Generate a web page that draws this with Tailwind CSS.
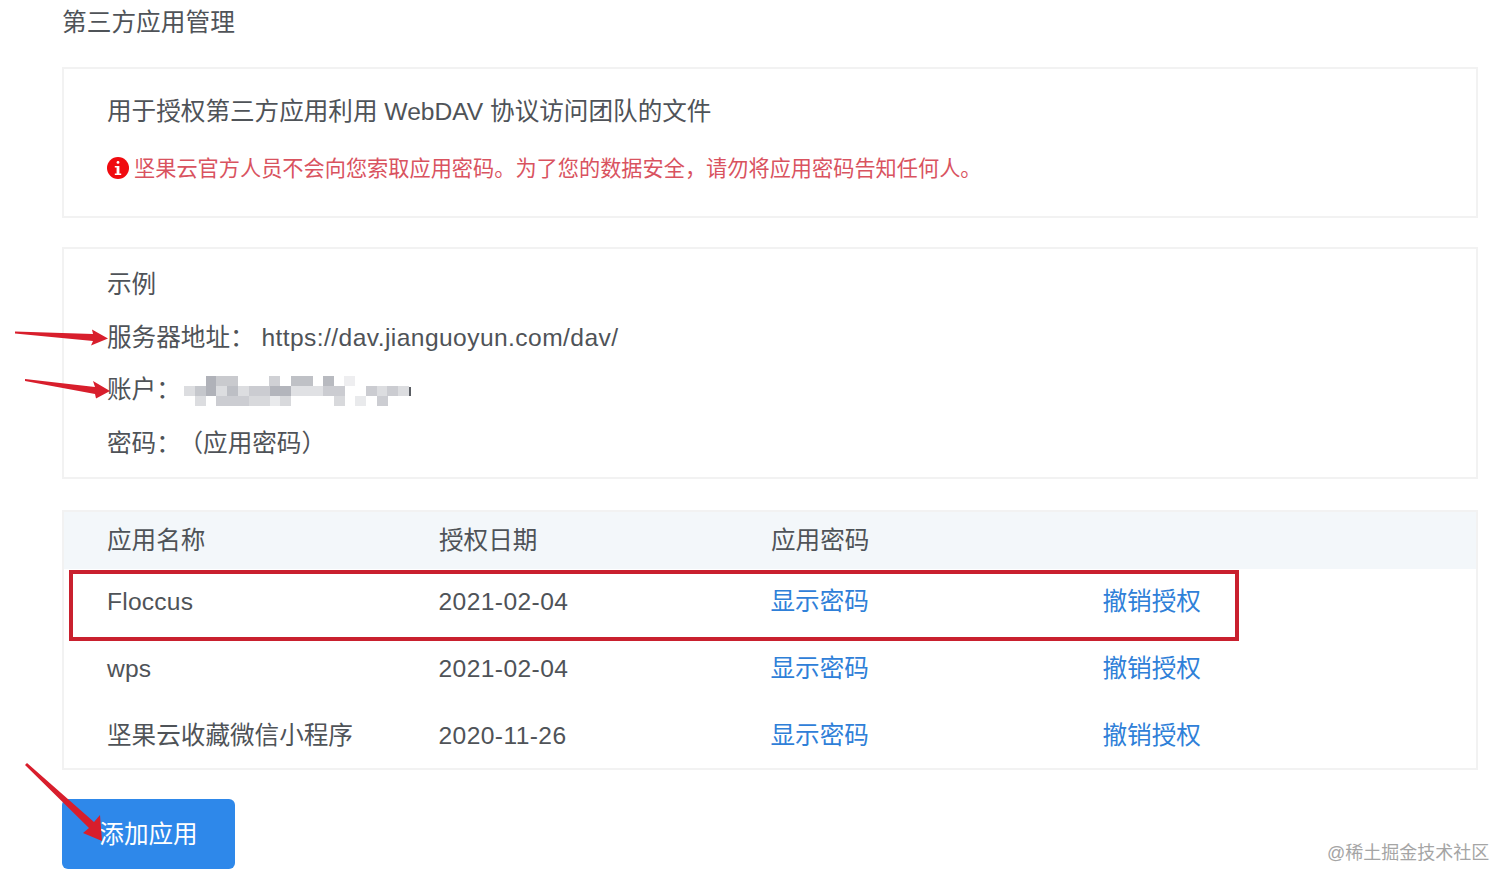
<!DOCTYPE html>
<html lang="zh-CN">
<head>
  <meta charset="UTF-8" />
  <title>第三方应用管理</title>
  <script src="https://cdn.jsdelivr.net/npm/@tailwindcss/browser@4"></script>
</head>
<body class="bg-white text-[#4f5358] font-['Liberation_Sans','Noto_Sans_CJK_SC',sans-serif]">

<div class="relative h-[887px] w-[1512px] overflow-hidden">
  <main class="w-[1416px] ml-[62px] text-[24.6px]">
    <h1 class="h-[44px] leading-[45px] font-normal text-[24.7px]">第三方应用管理</h1>

    <!-- 说明 -->
    <section class="mt-[23px] h-[151px] border-2 border-[#f2f2f2] pl-[43px] pt-[23px]">
      <p class="h-[40px] leading-[40px]">用于授权第三方应用利用 WebDAV 协议访问团队的文件</p>
      <p class="mt-[17px] flex items-center gap-[5px] text-[21.2px] leading-[40px] text-[#d9535f]">
        <svg class="w-[22px] h-[22px] shrink-0 -mt-[3px]" viewBox="0 0 22 22">
          <circle cx="11" cy="11" r="11" fill="#f00a0f" />
          <rect x="9.6" y="4" width="2.8" height="2.8" rx="1.4" fill="#fff" />
          <path d="M7.8 9h4.6v7.4h1.8v1.6H7.8v-1.6h1.8v-5.8H7.8z" fill="#fff" />
        </svg>
        <span>坚果云官方人员不会向您索取应用密码。为了您的数据安全，请勿将应用密码告知任何人。</span>
      </p>
    </section>

    <!-- 示例 -->
    <section class="mt-[29px] h-[232px] border-2 border-[#f2f2f2] pl-[43px] pt-[9px]">
      <p class="h-[53px] leading-[53px]">示例</p>
      <p class="h-[53px] leading-[53px]">服务器地址： <span class="tracking-[0.42px]">https://dav.jianguoyun.com/dav/</span></p>
      <p class="h-[53px] flex items-center">
        <span>账户：</span>
        <svg class="ml-[3px] w-[228px] h-[32px]" viewBox="0 0 228 32">
          <g fill="#dcdde0">
            <rect x="0" y="11" width="11" height="10" />
            <rect x="32" y="1" width="22" height="10" fill="#c9cace" />
            <rect x="32" y="11" width="11" height="10" />
            <rect x="54" y="11" width="11" height="10" />
            <rect x="85" y="1" width="11" height="10" fill="#d0d1d5" />
            <rect x="107" y="1" width="22" height="10" fill="#bfc1c6" />
            <rect x="139" y="1" width="11" height="10" fill="#b8bac0" />
            <rect x="150" y="11" width="11" height="10" fill="#cbccd1" />
            <rect x="160" y="1" width="11" height="10" fill="#eeeef0" />
            <rect x="96" y="11" width="43" height="10" fill="#e0e1e4" />
            <rect x="182" y="11" width="11" height="10" fill="#cbccd1" />
            <rect x="203" y="11" width="11" height="10" fill="#cbccd1" />
            <rect x="193" y="11" width="10" height="10" />
            <rect x="214" y="11" width="11" height="10" />
            <rect x="11" y="11" width="11" height="10" fill="#c5c7cc" />
            <rect x="22" y="1" width="10" height="20" fill="#b0b2b9" />
            <rect x="43" y="11" width="11" height="10" fill="#bdbfc5" />
            <rect x="65" y="11" width="21" height="10" fill="#cbccd1" />
            <rect x="86" y="11" width="21" height="10" fill="#b3b5bc" />
            <rect x="139" y="11" width="11" height="10" fill="#cbccd1" />
            <rect x="11" y="21" width="11" height="10" />
            <rect x="32" y="21" width="33" height="10" fill="#cccdd2" />
            <rect x="65" y="21" width="22" height="10" fill="#d8d9dc" />
            <rect x="86" y="21" width="10" height="10" fill="#e9eaec" />
            <rect x="96" y="21" width="11" height="10" fill="#d8d9dc" />
            <rect x="150" y="21" width="11" height="10" fill="#d8d9dc" />
            <rect x="171" y="21" width="11" height="10" fill="#e9eaec" />
            <rect x="193" y="21" width="11" height="10" fill="#cccdd2" />
          </g>
          <rect x="225" y="12" width="2" height="9" fill="#5b5e64" />
        </svg>
      </p>
      <p class="h-[53px] leading-[53px]">密码：<span class="ml-[10px]">（应用密码）</span></p>
    </section>

    <!-- 应用列表 -->
    <section class="mt-[31px] h-[260px] border-2 border-[#f2f2f2]">
      <div class="grid grid-cols-[332px_332px_332px_1fr] h-[57px] items-center bg-[#f3f7fa] pl-[43px] pt-[2px]">
        <span>应用名称</span><span>授权日期</span><span>应用密码</span><span></span>
      </div>
      <div class="grid grid-cols-[331.5px_332px_332px_1fr] h-[67px] items-center pl-[43px]">
        <span class="tracking-[0.2px]">Floccus</span><span class="tracking-[0.4px]">2021-02-04</span><a class="text-[#2f80d8]">显示密码</a><a class="text-[#2f80d8]">撤销授权</a>
      </div>
      <div class="grid grid-cols-[331.5px_332px_332px_1fr] h-[67px] items-center pl-[43px]">
        <span class="tracking-[0.2px]">wps</span><span class="tracking-[0.4px]">2021-02-04</span><a class="text-[#2f80d8]">显示密码</a><a class="text-[#2f80d8]">撤销授权</a>
      </div>
      <div class="grid grid-cols-[331.5px_332px_332px_1fr] h-[67px] items-center pl-[43px]">
        <span>坚果云收藏微信小程序</span><span class="tracking-[0.4px]">2020-11-26</span><a class="text-[#2f80d8]">显示密码</a><a class="text-[#2f80d8]">撤销授权</a>
      </div>
    </section>

    <button class="mt-[29px] w-[173px] h-[70px] rounded-[6px] bg-[#2e88ea] text-white text-[24.6px] pt-[2px]">添加应用</button>
  </main>

  <!-- 标注 -->
  <div class="absolute left-[69px] top-[570px] w-[1170px] h-[71px] border-[4px] border-[#c9202e]"></div>
  <svg class="absolute left-0 top-0 w-[1512px] h-[887px] pointer-events-none" viewBox="0 0 1512 887">
    <g fill="#d81e2c">
      <path d="M15 331.500 93 334 92 329.500 108 338.500 91 345.500 93 341 15 333.500z" />
      <path d="M25 379 95 387 93 381 110 391 96 398.500 95 394 25 381z" />
      <path d="M25 765 27 763 94 822 100 815 102 841 83 833 89 828z" />
    </g>
  </svg>
  <span class="absolute left-[1327px] top-[841px] text-[18px] leading-[24px] text-[#a5a5a5]">@稀土掘金技术社区</span>
</div>

</body>
</html>
